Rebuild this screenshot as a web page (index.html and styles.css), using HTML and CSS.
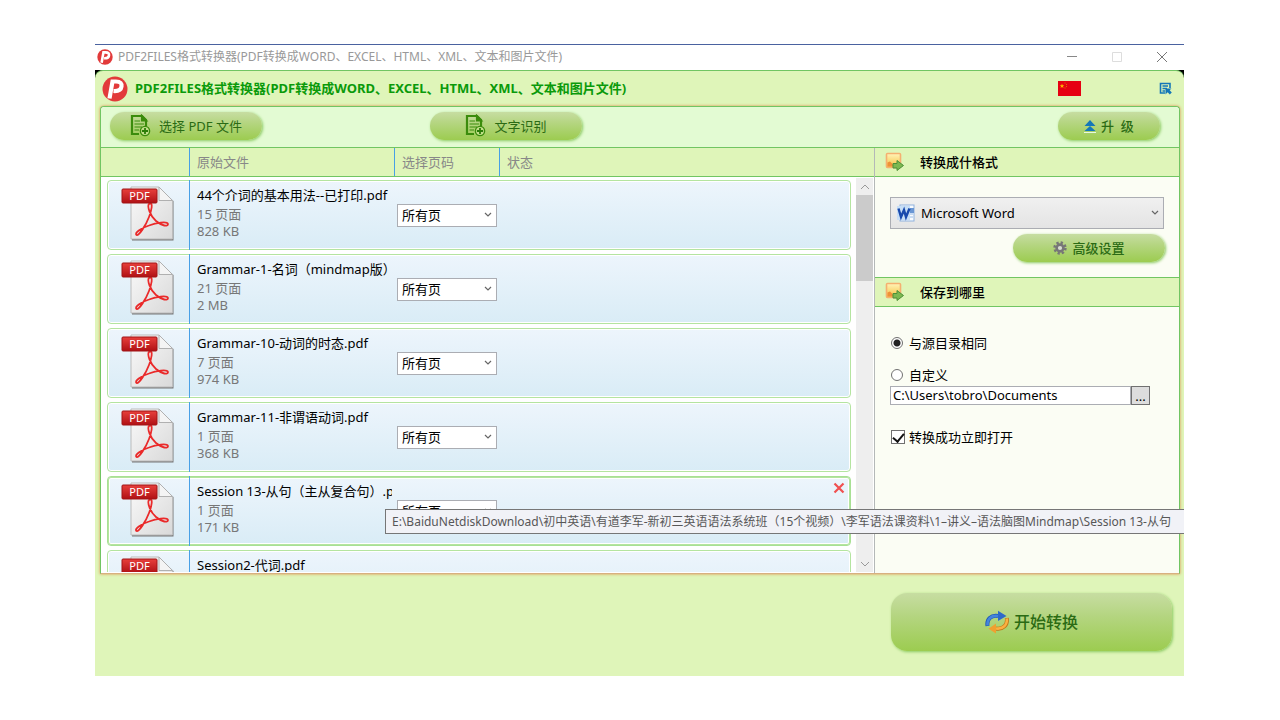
FILE: index.html
```html
<!DOCTYPE html>
<html lang="zh-CN">
<head>
<meta charset="utf-8">
<title>PDF2FILES格式转换器</title>
<link rel="stylesheet" href="styles.css">
</head>
<body>
<svg class="defs" aria-hidden="true">
  <defs>
    <linearGradient id="paper" x1="0" y1="0" x2="1" y2="1"><stop offset="0" stop-color="#fafafa"/><stop offset="1" stop-color="#d9d9d9"/></linearGradient>
    <linearGradient id="banner" x1="0" y1="0" x2="0" y2="1"><stop offset="0" stop-color="#e8403c"/><stop offset="1" stop-color="#b01014"/></linearGradient>
    <linearGradient id="note" x1="0" y1="0" x2="0" y2="1"><stop offset="0" stop-color="#fff4b8"/><stop offset="1" stop-color="#f6c040"/></linearGradient>
  </defs>
  <symbol id="logo" viewBox="0 0 26 26">
    <circle cx="13" cy="13" r="12.500" fill="#e23a3a"/>
    <path d="M7.500 22.500 10.500 5.500H14C18.500 5.500 20 7.500 19.500 10.500 19 14 16 15.300 11.500 15" fill="none" stroke="#fff" stroke-width="4.200"/>
  </symbol>
  <symbol id="pdf" viewBox="0 0 54 56">
    <path d="M11 2H38L52.500 15V54.500H11Z" fill="#777"/>
    <path d="M10 1H38L51.500 14.500V53H10Z" fill="url(#paper)" stroke="#bbb"/>
    <path d="M38 1V14.500H51.500Z" fill="#f4f4f4" stroke="#b0b0b0"/>
    <path d="M28 18C33 15 30 26 28 31 25 39 18 50 15.500 49 13 47 20 42 28 39.500 35 37 46 35 47 38 47 41 41 40 35 35 29 30 26 20 28 18Z" fill="none" stroke="#ea2a2a" stroke-width="1.800"/>
    <rect x="1" y="3" width="35" height="14" rx="1" fill="url(#banner)" stroke="#a01416"/>
  </symbol>
  <symbol id="docadd" viewBox="0 0 22 24">
    <path d="M2 2H12L16 6V13M2 1V20H9" fill="none" stroke="#3b8c0c" stroke-width="2.200"/>
    <path d="M11.500 1V7H17ZM4.500 7H10M4.500 10H14M4.500 13H12M4.500 16H9" fill="#3b8c0c" stroke="#3b8c0c" stroke-width="1.200"/>
    <circle cx="15" cy="17" r="4.600" fill="#c2de8a" stroke="#3b8c0c" stroke-width="1.400"/>
    <path d="M12 17H18M15 14V20" stroke="#2c7c08" stroke-width="1.800"/>
  </symbol>
  <symbol id="noteout" viewBox="0 0 20 20">
    <rect x="1.500" y="1.500" width="14" height="14" rx="1" fill="url(#note)" stroke="#f5b070" stroke-width="1.600"/>
    <path d="M2.500 10.500 5 9.500 8 12.500V14.500H2.500Z" fill="#ee9038"/>
    <path d="M8 11.500H12V8.500L18.500 13.500 12 18.500V16H8Z" fill="#7cb851" stroke="#4c9038"/>
  </symbol>
  <symbol id="chev" viewBox="0 0 8 6"><path d="M1 1 4 4 7 1" fill="none" stroke="#666" stroke-width="1.200"/></symbol>
</svg>

<main class="window">
  <header class="titlebar">
    <svg class="logo-s"><use href="#logo"/></svg>
    <span class="caption">PDF2FILES格式转换器(PDF转换成WORD、EXCEL、HTML、XML、文本和图片文件)</span>
    <button class="sys" aria-label="最小化"><svg viewBox="0 0 12 12"><path d="M1 5.500H11" stroke="#888"/></svg></button>
    <button class="sys" aria-label="最大化"><svg viewBox="0 0 12 12"><path d="M1.500 1.500H10.500V10.500H1.500Z" fill="none" stroke="#ddd"/></svg></button>
    <button class="sys" aria-label="关闭"><svg viewBox="0 0 12 12"><path d="M1 1 11 11M11 1 1 11" stroke="#777"/></svg></button>
  </header>

  <div class="corners">
  <div class="app">
    <div class="banner">
      <svg class="logo-l"><use href="#logo"/></svg>
      <h1>PDF2FILES格式转换器(PDF转换成WORD、EXCEL、HTML、XML、文本和图片文件)</h1>
      <button class="flag" aria-label="语言"><svg viewBox="0 0 23 15"><rect width="23" height="15" fill="#e60012"/><path d="M4 2.500 4.600 4.200H6.300L5 5.200 5.500 7 4 6 2.600 7 3 5.200 1.700 4.200H3.400Z" fill="#ffb400"/><path d="M6.500 1.500h1v1h-1zM8 3h1v1H8zM8 5h1v1H8zM6.500 6.500h1v1h-1z" fill="#e07000"/></svg></button>
      <button class="menu" aria-label="菜单"><svg viewBox="0 0 13 13"><path d="M6 11H1.500V1.500H11V6M3.500 4H9M3.500 6.500H8M3.500 9H6" fill="none" stroke="#1477b8" stroke-width="1.600"/><path d="M6.500 6.500H12.500L10.700 8.300 12.800 10.500 10.800 12.500 8.600 10.300 6.500 12.500Z" fill="#1477b8"/></svg></button>
    </div>

    <div class="panel">
      <div class="toolbar">
        <button class="pill pick"><svg class="i22"><use href="#docadd"/></svg>选择 PDF 文件</button>
        <button class="pill ocr"><svg class="i22"><use href="#docadd"/></svg>文字识别</button>
        <button class="pill upgrade"><svg class="up" viewBox="0 0 12 13"><path d="M6 0 11.500 6H.5ZM6 6 11.500 11H.5Z" fill="#1478b8"/><path d="M0 12.500H12" stroke="#e8f8e0"/></svg>升&nbsp; 级</button>
      </div>

      <div class="content">
        <section class="files">
          <div class="columns"><span class="c-icon"></span><span class="c-name">原始文件</span><span class="c-page">选择页码</span><span class="c-state">状态</span></div>
          <div class="listwrap">
            <ul class="list">
              <li class="row"><span class="thumb"><svg><use href="#pdf"/></svg><i>PDF</i></span><div class="info"><b>44个介词的基本用法--已打印.pdf</b><span>15 页面</span><span>828 KB</span></div><span class="combo"><select aria-label="选择页码"><option>所有页</option></select><svg><use href="#chev"/></svg></span></li>
              <li class="row"><span class="thumb"><svg><use href="#pdf"/></svg><i>PDF</i></span><div class="info"><b>Grammar-1-名词（mindmap版）</b><span>21 页面</span><span>2 MB</span></div><span class="combo"><select aria-label="选择页码"><option>所有页</option></select><svg><use href="#chev"/></svg></span></li>
              <li class="row"><span class="thumb"><svg><use href="#pdf"/></svg><i>PDF</i></span><div class="info"><b>Grammar-10-动词的时态.pdf</b><span>7 页面</span><span>974 KB</span></div><span class="combo"><select aria-label="选择页码"><option>所有页</option></select><svg><use href="#chev"/></svg></span></li>
              <li class="row"><span class="thumb"><svg><use href="#pdf"/></svg><i>PDF</i></span><div class="info"><b>Grammar-11-非谓语动词.pdf</b><span>1 页面</span><span>368 KB</span></div><span class="combo"><select aria-label="选择页码"><option>所有页</option></select><svg><use href="#chev"/></svg></span></li>
              <li class="row active"><span class="thumb"><svg><use href="#pdf"/></svg><i>PDF</i></span><div class="info"><b>Session 13-从句（主从复合句）.pdf</b><span>1 页面</span><span>171 KB</span></div><span class="combo"><select aria-label="选择页码"><option>所有页</option></select><svg><use href="#chev"/></svg></span><button class="remove" aria-label="移除"><svg viewBox="0 0 12 12"><path d="M1.500 1.500 10.500 10.500M10.500 1.500 1.500 10.500" stroke="#f05050" stroke-width="2.200"/></svg></button></li>
              <li class="row"><span class="thumb"><svg><use href="#pdf"/></svg><i>PDF</i></span><div class="info"><b>Session2-代词.pdf</b></div></li>
            </ul>
            <div class="scroll">
              <button aria-label="向上"><svg viewBox="0 0 10 6"><path d="M1 5 5 1 9 5" fill="none" stroke="#999"/></svg></button>
              <div class="thumbbar"></div>
              <button class="down" aria-label="向下"><svg viewBox="0 0 10 6"><path d="M1 1 5 5 9 1" fill="none" stroke="#999"/></svg></button>
            </div>
          </div>
        </section>

        <aside class="side">
          <h2><svg><use href="#noteout"/></svg>转换成什格式</h2>
          <div class="format">
            <span class="combo big">
              <select aria-label="转换格式"><option>Microsoft Word</option></select>
              <svg class="word" viewBox="0 0 18 18"><rect x="3" y="1" width="14" height="16" fill="#f8fbff" stroke="#8fb2de"/><path d="M12 10H16M12 13H16" stroke="#9abce6"/><path d="M13 4H17V9H13Z" fill="#6a96d4"/><rect x="0" y="2" width="13" height="14" fill="#c7def6"/><path d="M1.500 4.500 4 13 7 6 9 13 12.500 4.500" fill="none" stroke="#1749ad" stroke-width="2.400"/></svg>
              <svg class="arrow"><use href="#chev"/></svg>
            </span>
            <button class="pill advanced"><svg class="gear" viewBox="0 0 14 14"><circle cx="7" cy="7" r="5.400" fill="none" stroke="#777" stroke-width="2.600" stroke-dasharray="2.240 2"/><circle cx="7" cy="7" r="3.400" fill="#d8dcd2" stroke="#777" stroke-width="2.600"/></svg>高级设置</button>
          </div>
          <h2><svg><use href="#noteout"/></svg>保存到哪里</h2>
          <div class="save">
            <label class="same"><input type="radio" name="dest" checked>与源目录相同</label>
            <label><input type="radio" name="dest">自定义</label>
            <div class="path"><input type="text" aria-label="路径" value="C:\Users\tobro\Documents"><button>...</button></div>
            <label class="open"><input type="checkbox" checked>转换成功立即打开</label>
          </div>
        </aside>
      </div>
    </div>

    <footer>
      <button class="start"><svg viewBox="0 0 24 24"><path d="M2.500 16C1.500 9 6 5 13 6" fill="none" stroke="#1d56b5" stroke-width="4"/><path d="M2.500 15.500C2 9 6 5 13 6" fill="none" stroke="#4585dc" stroke-width="2.600"/><path d="M13 .8 21.500 6 13 11Z" fill="#2e69c9"/><path d="M21.800 8C23 15 18 19.500 11 18.500" fill="none" stroke="#c07818" stroke-width="4"/><path d="M21.800 8.500C22.500 15 18 19.500 11 18.500" fill="none" stroke="#fbb040" stroke-width="2.600"/><path d="M11 13.500 3.500 18.700 11 23.500Z" fill="#f0a030"/></svg>开始转换</button>
    </footer>
  </div>
  </div>
  <div class="tooltip" role="tooltip">E:\BaiduNetdiskDownload\初中英语\有道李军-新初三英语语法系统班（15个视频）\李军语法课资料\1–讲义–语法脑图Mindmap\Session 13-从句</div>
</main>
</body>
</html>
```
FILE: styles.css
```css
* { box-sizing: border-box; }
body {
  margin: 0;
  padding: 44px 96px 44px 95px;
  background: #fff;
  font: 13px/18px "Noto Sans", "Noto Sans CJK SC", sans-serif;
  color: #000;
}
button, input, select { font: inherit; color: inherit; margin: 0; padding: 0; }
button { border: 0; background: none; }
svg { display: block; flex: none; }
.defs { position: absolute; width: 0; height: 0; }

.window {
  position: relative;
  display: flex;
  flex-direction: column;
  height: calc(100vh - 88px);
  min-height: 480px;
  overflow: hidden;
}
.titlebar {
  display: flex;
  align-items: center;
  height: 26px;
  padding-bottom: 1px;
  border-top: 1px solid #4a62a0;
  background: #fff;
  font-size: 12px;
  color: #999;
}
.logo-s { width: 16px; height: 16px; margin: 0 5px 0 2px; }
.caption { flex: 1; white-space: nowrap; }
.sys { display: grid; place-items: center; width: 45px; height: 24px; }
.sys svg { width: 12px; height: 12px; }

.corners { flex: 1; min-height: 0; background: linear-gradient(#000 20px, #dff5b9 20px); }
.app {
  display: flex;
  flex-direction: column;
  height: 100%;
  border-top: 1px solid #71c562;
  border-radius: 8px 8px 0 0;
  background: #dff5b9;
}
.banner { display: flex; align-items: center; height: 35px; padding: 0 12px 0 7px; }
.logo-l { width: 26px; height: 26px; margin-right: 7px; }
h1 { flex: 1; margin: 0; padding-bottom: 2px; font-size: 13px; font-weight: 700; color: #0a9a0a; white-space: nowrap; }
.flag svg { width: 23px; height: 15px; }
.menu { margin-left: 78px; }
.menu svg { width: 13px; height: 13px; }

.panel {
  flex: 1;
  min-height: 0;
  display: flex;
  flex-direction: column;
  margin: 0 4px 0 5px;
  border: 1px solid #71c562;
  border-bottom-color: #d8b080;
  border-radius: 4px 4px 0 0;
  box-shadow: 0 0 3px #e08848;
  background: #fff;
}
.toolbar {
  display: flex;
  align-items: center;
  height: 41px;
  padding: 0 19px 2px 9px;
  border-bottom: 1px solid #71c562;
  border-radius: 4px 4px 0 0;
  background: #e3fbd3;
}
.pill, .start {
  display: flex;
  align-items: center;
  justify-content: center;
  background: linear-gradient(#c7dda2, #b4d580 40%, #9ccc50);
  box-shadow: 1px 1px 3px #8aca60;
  color: #2b6b14;
}
.pill { height: 28px; border-radius: 14px; }
.pick, .ocr, .advanced { width: 152px; }
.i22 { width: 22px; height: 24px; margin-right: 7px; }
.ocr { margin-left: 168px; }
.upgrade { width: 102px; margin-left: auto; font-weight: 500; }
.up { width: 12px; height: 13px; margin-right: 5px; }

.content { flex: 1; min-height: 0; display: grid; grid-template-columns: minmax(0, 1fr) 304px; }
.files { display: flex; flex-direction: column; min-height: 0; border-right: 1px solid #b4b8b8; }
.columns { display: flex; height: 29px; border-bottom: 1px solid #71c562; background: #dff5b9; color: #888; }
.columns span { flex: none; line-height: 28px; padding-left: 7px; border-right: 1px solid #48a0e6; }
.columns .c-icon { width: 89px; }
.columns .c-name { width: 205px; }
.columns .c-page { width: 105px; }
.columns .c-state { flex: 1; border: 0; }

.listwrap { flex: 1; min-height: 0; display: flex; padding: 1px 0; }
.list {
  flex: 1;
  min-width: 0;
  margin: 0;
  padding: 2px 5px 0 6px;
  overflow: hidden;
  list-style: none;
}
.row {
  position: relative;
  display: flex;
  height: 70px;
  margin-bottom: 4px;
  border: 1px solid #b4e4a0;
  border-radius: 4px;
  background: linear-gradient(#edf5fc, #d9ecf6);
  box-shadow: inset 0 0 0 1px #fff;
}
.row.active { border-color: #a8e094; box-shadow: inset 0 0 0 1px #b4e4a0, inset 0 0 0 2px #fff; }
.thumb { position: relative; width: 82px; padding: 6px 0 0 13px; border-right: 1px solid #48a0e6; margin: -1px 0; }
.thumb svg { width: 54px; height: 56px; }
.thumb i {
  position: absolute;
  left: 14px;
  top: 9px;
  width: 35px;
  color: #fff;
  font: 11px/14px "Noto Sans", sans-serif;
  text-align: center;
}
.info { width: 202px; padding: 5px 0 0 7px; overflow: hidden; color: #777; line-height: 17px; white-space: nowrap; }
.info b, .info span { display: block; }
.info b { color: #000; font-weight: 400; line-height: 19px; }
.info span:nth-child(2) { line-height: 18px; }

.combo { position: relative; }
.combo select { appearance: none; border: 1px solid #abadb3; border-radius: 0; }
.row .combo { width: 100px; margin: 23px 0 0 5px; }
.row .combo select { width: 100%; height: 23px; padding: 0 0 2px 4px; background: #fff; }
.combo svg { position: absolute; right: 5px; top: 8px; width: 8px; height: 6px; pointer-events: none; }
.remove { position: absolute; right: 5px; top: 5px; }
.remove svg { width: 12px; height: 12px; }

.scroll { display: flex; flex-direction: column; width: 17px; margin-right: 1px; background: #eee; }
.scroll button { display: grid; place-items: center; height: 17px; }
.scroll svg { width: 10px; height: 6px; }
.thumbbar { height: 86px; background: #cbcbcb; }
.down { margin-top: auto; }

.side { background: #fbfdf4; min-height: 0; }
h2 {
  display: flex;
  align-items: center;
  height: 29px;
  margin: 0;
  padding-left: 10px;
  border-bottom: 1px solid #71c562;
  background: #dff5b9;
  font-size: 13px;
  font-weight: 500;
}
h2 svg { width: 20px; height: 20px; margin-right: 15px; }
.format { padding: 20px 15px 15px; border-bottom: 1px solid #71c562; }
.big { display: block; }
.big select { width: 100%; height: 32px; padding-left: 30px; background: linear-gradient(#f0f0f0, #e4e4e4); }
.big .word { left: 7px; top: 7px; width: 18px; height: 18px; }
.big .arrow { top: 13px; }
.advanced { margin: 5px -1px 0 auto; font-weight: 500; }
.gear { width: 14px; height: 14px; margin-right: 5px; }

.save { display: flex; flex-direction: column; align-items: flex-start; padding: 26px 29px 0 15px; }
.save label { display: flex; align-items: center; height: 20px; }
.save .same { margin-bottom: 12px; }
.save label input { appearance: none; width: 12px; height: 12px; margin: 0 6px 0 1px; border: 1px solid #707070; background: #fff; }
.save input[type="radio"] { border-radius: 50%; }
.save input[type="radio"]:checked { background: radial-gradient(circle, #222 3px, #fff 4px); }
.save input[type="checkbox"] {
  width: 14px;
  height: 14px;
  margin-right: 4px;
  display: grid;
  place-items: center;
}
.save input[type="checkbox"]::before {
  content: "";
  width: 5px;
  height: 9px;
  margin-bottom: 2px;
  border: solid #111;
  border-width: 0 2px 2px 0;
  transform: rotate(40deg);
}
.path { display: flex; width: 100%; height: 19px; margin-top: 1px; }
.path input { flex: 1; min-width: 0; padding: 0 2px 2px; border: 1px solid #abadb3; background: #fff; }
.path button { width: 19px; border: 1px solid #707070; background: #ddd; line-height: 16px; }
.save .open { margin-top: 22px; }

footer { display: flex; justify-content: flex-end; padding: 19px 12px 25px; }
.start { width: 281px; height: 58px; border-radius: 16px; font-size: 16px; font-weight: 500; }
.start svg { width: 24px; height: 24px; margin-right: 5px; }

.tooltip {
  position: absolute;
  left: 290px;
  right: 0;
  top: 465px;
  height: 25px;
  padding-left: 6px;
  border: 1px solid #767676;
  border-right: 0;
  background: #f1f2f7;
  color: #575757;
  font-size: 12px;
  line-height: 23px;
  white-space: nowrap;
  overflow: hidden;
}
```
